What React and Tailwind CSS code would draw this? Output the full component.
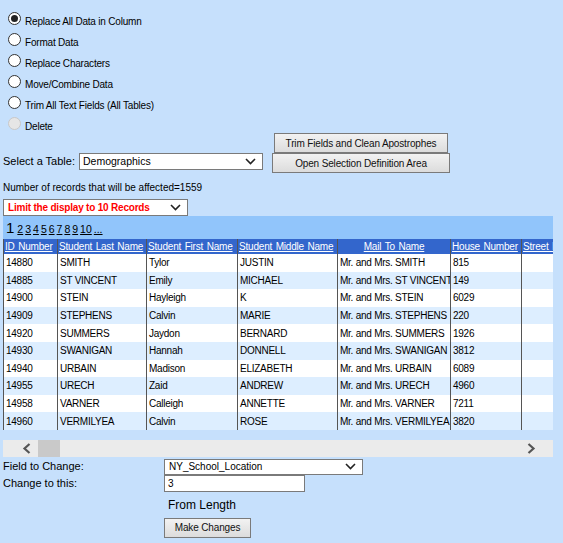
import React from "react";

const font = { fontFamily: '"Liberation Sans", Arial, sans-serif' };

const options = [
  { label: "Replace All Data in Column", checked: true },
  { label: "Format Data" },
  { label: "Replace Characters" },
  { label: "Move/Combine Data" },
  { label: "Trim All Text Fields (All Tables)" },
  { label: "Delete", disabled: true },
];

const columns = [
  { name: "ID Number", w: "w-[54px]" },
  { name: "Student Last Name", w: "w-[89px]" },
  { name: "Student First Name", w: "w-[91px]" },
  { name: "Student Middle Name", w: "w-[100px]" },
  { name: "Mail To Name", w: "w-[113px]", center: true },
  { name: "House Number", w: "w-[71px]" },
  { name: "Street Name", w: "w-[120px]" },
];

const rows = [
  ["14880", "SMITH", "Tylor", "JUSTIN", "Mr. and Mrs. SMITH", "815"],
  ["14885", "ST VINCENT", "Emily", "MICHAEL", "Mr. and Mrs. ST VINCENT", "149"],
  ["14900", "STEIN", "Hayleigh", "K", "Mr. and Mrs. STEIN", "6029"],
  ["14909", "STEPHENS", "Calvin", "MARIE", "Mr. and Mrs. STEPHENS", "220"],
  ["14920", "SUMMERS", "Jaydon", "BERNARD", "Mr. and Mrs. SUMMERS", "1926"],
  ["14930", "SWANIGAN", "Hannah", "DONNELL", "Mr. and Mrs. SWANIGAN", "3812"],
  ["14940", "URBAIN", "Madison", "ELIZABETH", "Mr. and Mrs. URBAIN", "6089"],
  ["14955", "URECH", "Zaid", "ANDREW", "Mr. and Mrs. URECH", "4960"],
  ["14958", "VARNER", "Calleigh", "ANNETTE", "Mr. and Mrs. VARNER", "7211"],
  ["14960", "VERMILYEA", "Calvin", "ROSE", "Mr. and Mrs. VERMILYEA", "3820"],
];

function Chevron({ className = "" }) {
  return (
    <svg width="11" height="7" viewBox="0 0 11 7" className={className}>
      <path d="M1 1l4.5 4.5L10 1" fill="none" stroke="currentColor" strokeWidth="1.6" />
    </svg>
  );
}

function Radio({ checked, disabled }) {
  return (
    <span
      className={`flex h-[13px] w-[13px] shrink-0 items-center justify-center rounded-full border ${
        disabled ? "border-[#c8c8c8] bg-[#e6e6e6]" : "border-[#333] bg-white"
      }`}
    >
      {checked ? <span className="h-[7px] w-[7px] rounded-full bg-[#222]" /> : null}
    </span>
  );
}

function Select({ value, className = "", textClass = "" }) {
  return (
    <div
      className={`flex items-center justify-between border border-[#7a7a7a] bg-white pl-[3px] pr-[6px] ${className}`}
    >
      <span className={`whitespace-nowrap ${textClass}`}>{value}</span>
      <Chevron className="text-[#222]" />
    </div>
  );
}

function Button({ children, className = "" }) {
  return (
    <button
      className={`flex h-[20px] items-center justify-center whitespace-nowrap border border-[#7a7a7a] bg-gradient-to-b from-[#f2f2f2] to-[#dcdcdc] text-[10px] tracking-[-0.15px] text-[#111] ${className}`}
    >
      {children}
    </button>
  );
}

export default function App() {
  return (
    <div className="min-h-[543px] w-full bg-[#c6e0fc] px-[3px] text-[10px] text-black" style={font}>
      <div className="flex flex-col pt-[12px]">
        {options.map((o) => (
          <label key={o.label} className="flex h-[21px] items-start gap-[4px] pl-[5px]">
            <Radio checked={o.checked} disabled={o.disabled} />
            <span className="pt-[4px] text-[10px] leading-[12px] tracking-[-0.2px]">{o.label}</span>
          </label>
        ))}
      </div>

      <div className="mt-[-5px] flex items-end">
        <div className="flex items-center pb-[3px]">
          <span className="w-[76px] whitespace-nowrap text-[11px]">Select a Table:</span>
          <Select value="Demographics" className="h-[17px] w-[184px]" textClass="text-[10.5px]" />
        </div>
        <div className="ml-[9px] flex flex-col items-center">
          <Button className="w-[174px]">Trim Fields and Clean Apostrophes</Button>
          <Button className="w-[178px]">Open Selection Definition Area</Button>
        </div>
      </div>

      <div className="mt-[8px] h-[14px] leading-[14px]">Number of records that will be affected=1559</div>

      <Select
        value="Limit the display to 10 Records"
        className="mt-[4px] h-[17px] w-[185px] pl-[4px]"
        textClass="text-[10px] font-bold tracking-[-0.2px] text-[#ff0000]"
      />

      <div className="w-[550px] overflow-hidden">
        <div className="flex h-[23px] items-end gap-[2px] bg-[#91c5fb] pb-[3px] pl-[3px]">
          <span className="mr-[1px] text-[15px] leading-[16px]">1</span>
          {["2", "3", "4", "5", "6", "7", "8", "9", "10", "..."].map((p) => (
            <span key={p} className="text-[10.5px] leading-[13px] underline">
              {p}
            </span>
          ))}
        </div>
        <table className="w-[638px] table-fixed border-collapse">
          <thead>
            <tr className="h-[15px] bg-[#3366cc] text-white">
              {columns.map((c) => (
                <th
                  key={c.name}
                  className={`${c.w} overflow-hidden border-x border-[#555] px-[1px] text-[10px] font-normal leading-[13px] tracking-[-0.2px] whitespace-nowrap underline [word-spacing:1px] ${
                    c.center ? "text-center" : "text-left"
                  }`}
                >
                  {c.name}
                </th>
              ))}
            </tr>
          </thead>
          <tbody>
            {rows.map((r, i) => (
              <tr key={r[0]} className={`h-[17.6px] ${i % 2 ? "bg-[#ddeeff]" : "bg-white"}`}>
                {[...r, ""].map((v, j) => (
                  <td
                    key={j}
                    className="overflow-hidden border-x border-[#555] px-[2px] text-[10px] leading-[13px] tracking-[-0.25px] whitespace-nowrap"
                  >
                    {v}
                  </td>
                ))}
              </tr>
            ))}
          </tbody>
        </table>
        <div className="mt-[10px] flex h-[17px] items-center bg-[#ebebeb]">
          <svg width="10" height="11" viewBox="0 0 10 11" className="ml-[19px] text-[#555]">
            <path d="M7.5 1L2.5 5.5l5 4.5" fill="none" stroke="currentColor" strokeWidth="2.2" />
          </svg>
          <span className="ml-[6px] h-[17px] w-[22px] bg-[#c9c9c9]" />
          <svg width="10" height="11" viewBox="0 0 10 11" className="ml-auto mr-[17px] text-[#555]">
            <path d="M2.5 1l5 4.5-5 4.5" fill="none" stroke="currentColor" strokeWidth="2.2" />
          </svg>
        </div>
      </div>

      <div className="grid grid-cols-[161px_1fr] text-[11px]">
        <span className="mt-[1px] leading-[16px]">Field to Change:</span>
        <Select value="NY_School_Location" className="mt-[2px] h-[16px] w-[199px] pl-[4px]" textClass="text-[10px]" />
        <span className="leading-[16px]">Change to this:</span>
        <div className="flex h-[17px] w-[141px] items-center border border-[#7a7a7a] bg-white pl-[3px] text-[10px]">3</div>
        <span />
        <span className="mt-[5px] pl-[4px] text-[12px] leading-[16px]">From Length</span>
        <span />
        <Button className="mt-[5px] w-[87px]">Make Changes</Button>
      </div>
    </div>
  );
}
